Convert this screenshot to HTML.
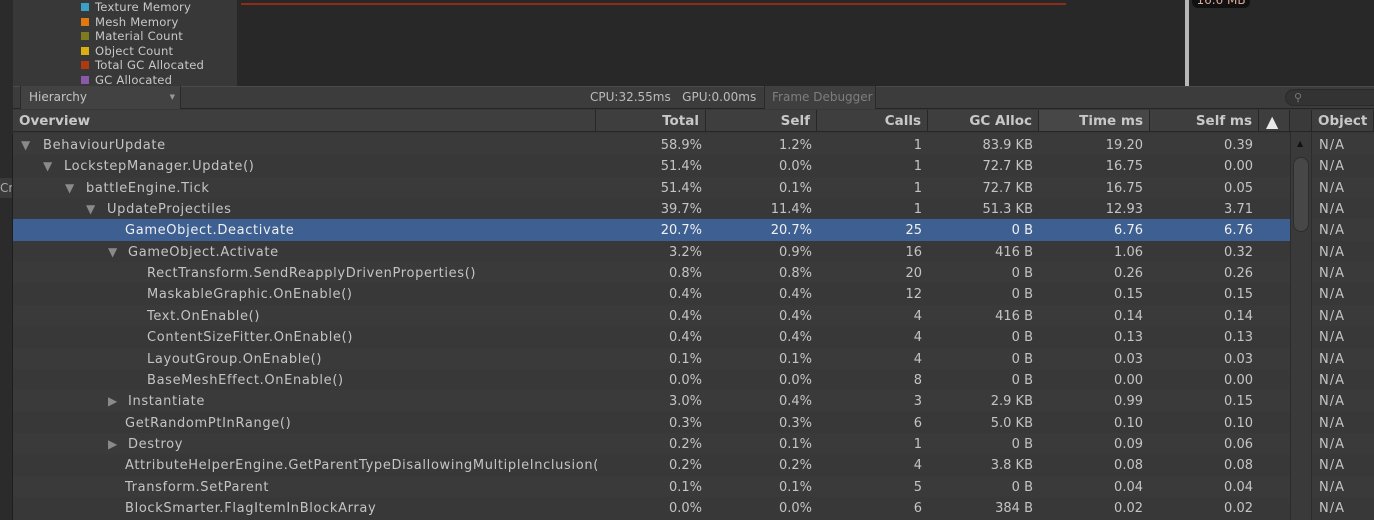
<!DOCTYPE html>
<html><head><meta charset="utf-8"><style>
*{margin:0;padding:0;box-sizing:border-box}
body{width:1374px;height:520px;overflow:hidden;background:#383838;font-family:"DejaVu Sans","Liberation Sans",sans-serif;color:#c4c4c4;font-size:13px;position:relative}
.a{position:absolute}
.leg{position:absolute;left:81px;font-size:11.6px;color:#c8c8c8;line-height:14.5px;letter-spacing:0.2px}
.leg i{display:inline-block;width:8px;height:8px;margin-right:6px;vertical-align:0px}
.row{position:absolute;left:13px;width:1277px;height:21.35px;line-height:23px}
.row span{position:absolute;top:0;white-space:nowrap}
.row span.n{letter-spacing:0.65px}
.r{text-align:right}
.tri{font-size:12px;color:#8a8a8a}
.hd{position:absolute;top:110px;height:22px;line-height:22px;font-weight:bold;color:#c8c8c8;background:#3e3e3e;border-right:1px solid #262626;border-bottom:1px solid #262626;font-size:13.5px;padding-right:6px;text-align:right}
.obj{position:absolute;left:1312px;width:62px;height:21.35px;line-height:23px;padding-left:7px;letter-spacing:1px}
</style></head><body>
<div class="a" style="left:0;top:0;width:13px;height:520px;background:#2b2b2b"></div>
<div class="a" style="left:0;top:178px;width:13px;height:20px;background:#3a3a3a;color:#aaa;font-size:12px;line-height:20px">Cr</div>
<div class="a" style="left:0;top:134px;width:13px;height:386px;border-right:1px solid #1e1e1e"></div>
<div class="a" style="left:13px;top:0;width:224px;height:86px;background:#383838"></div>
<div class="leg" style="top:0"><i style="background:#3aa0c8"></i>Texture Memory</div>
<div class="leg" style="top:14.5px"><i style="background:#e07a10"></i>Mesh Memory</div>
<div class="leg" style="top:29px"><i style="background:#7d7a20"></i>Material Count</div>
<div class="leg" style="top:43.5px"><i style="background:#d8b012"></i>Object Count</div>
<div class="leg" style="top:58px"><i style="background:#b03a10"></i>Total GC Allocated</div>
<div class="leg" style="top:72.5px"><i style="background:#8a5aa8"></i>GC Allocated</div>
<div class="a" style="left:237px;top:0;width:1137px;height:86px;background:#282828"></div>
<div class="a" style="left:241px;top:3px;width:825px;height:2px;background:#8e2c18"></div>
<div class="a" style="left:1185px;top:0;width:4px;height:86px;background:#b8b8b8"></div>
<div class="a" style="left:1192px;top:-6px;width:58px;height:14px;background:#111;border-radius:6px;color:#d8a898;font-size:12px;line-height:12px;text-align:center">16.6 MB</div>
<div class="a" style="left:13px;top:86px;width:1361px;height:23px;background:#3c3c3c;border-top:1px solid #4a4a4a;border-bottom:1px solid #252525"></div>
<div class="a" style="left:20px;top:86px;width:161px;height:23px;background:#424242;border-right:1px solid #2a2a2a;border-left:1px solid #2a2a2a;font-size:12px;line-height:23px;padding-left:8px">Hierarchy<span style="position:absolute;right:5px;font-size:7px;color:#999">▼</span></div>
<div class="a" style="left:590px;top:86px;font-size:12px;line-height:23px;color:#bbb">CPU:32.55ms&nbsp;&nbsp;&nbsp;GPU:0.00ms</div>
<div class="a" style="left:764px;top:86px;width:112px;height:23px;background:#3f3f3f;border-left:1px solid #2a2a2a;border-right:1px solid #2a2a2a;font-size:12px;line-height:23px;padding-left:7px;color:#7e7e7e">Frame Debugger</div>
<div class="a" style="left:1285px;top:89px;width:100px;height:17px;border-radius:9px;background:#333;border:1px solid #2a2a2a;color:#777;font-size:11px;line-height:15px;padding-left:8px">&#9906;</div>
<div class="hd" style="left:13px;width:583px;text-align:left;padding-left:6px">Overview</div>
<div class="hd" style="left:596px;width:110px">Total</div>
<div class="hd" style="left:706px;width:111px">Self</div>
<div class="hd" style="left:817px;width:111px">Calls</div>
<div class="hd" style="left:928px;width:111px">GC Alloc</div>
<div class="hd" style="left:1039px;width:111px;background:#474747">Time ms</div>
<div class="hd" style="left:1150px;width:109px">Self ms</div>
<div class="hd" style="left:1259px;width:31px"></div>
<div class="a" style="left:1266px;top:113px;color:#e8e8e8;font-size:16px;line-height:18px">&#9650;</div>
<div class="hd" style="left:1290px;width:22px;background:#3a3a3a"></div>
<div class="hd" style="left:1312px;width:62px;text-align:left;padding-left:6px">Object</div>
<div class="a" style="left:1290px;top:132px;width:22px;height:388px;background:#3a3a3a;border-left:1px solid #2c2c2c;border-right:1px solid #2c2c2c"></div>
<div class="a" style="left:1297px;top:139px;font-size:8px;color:#111">&#9650;</div>
<div class="a" style="left:1293px;top:157px;width:16px;height:75px;border-radius:8px;background:#474747;border:1px solid #2c2c2c"></div>

<div class="row" style="top:134px;background:#3a3a3a"><span class="tri" style="left:8px">▼</span><span class="n" style="left:30px">BehaviourUpdate</span><span class="r" style="right:588px">58.9%</span><span class="r" style="right:478px">1.2%</span><span class="r" style="right:368px">1</span><span class="r" style="right:257px">83.9 KB</span><span class="r" style="right:147px">19.20</span><span class="r" style="right:37px">0.39</span></div>
<div class="row" style="top:155.35px;background:#383838"><span class="tri" style="left:30px">▼</span><span class="n" style="left:51px">LockstepManager.Update()</span><span class="r" style="right:588px">51.4%</span><span class="r" style="right:478px">0.0%</span><span class="r" style="right:368px">1</span><span class="r" style="right:257px">72.7 KB</span><span class="r" style="right:147px">16.75</span><span class="r" style="right:37px">0.00</span></div>
<div class="row" style="top:176.7px;background:#3a3a3a"><span class="tri" style="left:52px">▼</span><span class="n" style="left:73px">battleEngine.Tick</span><span class="r" style="right:588px">51.4%</span><span class="r" style="right:478px">0.1%</span><span class="r" style="right:368px">1</span><span class="r" style="right:257px">72.7 KB</span><span class="r" style="right:147px">16.75</span><span class="r" style="right:37px">0.05</span></div>
<div class="row" style="top:198.05px;background:#383838"><span class="tri" style="left:73px">▼</span><span class="n" style="left:94px">UpdateProjectiles</span><span class="r" style="right:588px">39.7%</span><span class="r" style="right:478px">11.4%</span><span class="r" style="right:368px">1</span><span class="r" style="right:257px">51.3 KB</span><span class="r" style="right:147px">12.93</span><span class="r" style="right:37px">3.71</span></div>
<div class="row" style="top:219.4px;background:#3d5f92;color:#f0f0f0"><span class="n" style="left:112px">GameObject.Deactivate</span><span class="r" style="right:588px">20.7%</span><span class="r" style="right:478px">20.7%</span><span class="r" style="right:368px">25</span><span class="r" style="right:257px">0 B</span><span class="r" style="right:147px">6.76</span><span class="r" style="right:37px">6.76</span></div>
<div class="row" style="top:240.75px;background:#383838"><span class="tri" style="left:95px">▼</span><span class="n" style="left:115px">GameObject.Activate</span><span class="r" style="right:588px">3.2%</span><span class="r" style="right:478px">0.9%</span><span class="r" style="right:368px">16</span><span class="r" style="right:257px">416 B</span><span class="r" style="right:147px">1.06</span><span class="r" style="right:37px">0.32</span></div>
<div class="row" style="top:262.1px;background:#3a3a3a"><span class="n" style="left:134px">RectTransform.SendReapplyDrivenProperties()</span><span class="r" style="right:588px">0.8%</span><span class="r" style="right:478px">0.8%</span><span class="r" style="right:368px">20</span><span class="r" style="right:257px">0 B</span><span class="r" style="right:147px">0.26</span><span class="r" style="right:37px">0.26</span></div>
<div class="row" style="top:283.45px;background:#383838"><span class="n" style="left:134px">MaskableGraphic.OnEnable()</span><span class="r" style="right:588px">0.4%</span><span class="r" style="right:478px">0.4%</span><span class="r" style="right:368px">12</span><span class="r" style="right:257px">0 B</span><span class="r" style="right:147px">0.15</span><span class="r" style="right:37px">0.15</span></div>
<div class="row" style="top:304.8px;background:#3a3a3a"><span class="n" style="left:134px">Text.OnEnable()</span><span class="r" style="right:588px">0.4%</span><span class="r" style="right:478px">0.4%</span><span class="r" style="right:368px">4</span><span class="r" style="right:257px">416 B</span><span class="r" style="right:147px">0.14</span><span class="r" style="right:37px">0.14</span></div>
<div class="row" style="top:326.15px;background:#383838"><span class="n" style="left:134px">ContentSizeFitter.OnEnable()</span><span class="r" style="right:588px">0.4%</span><span class="r" style="right:478px">0.4%</span><span class="r" style="right:368px">4</span><span class="r" style="right:257px">0 B</span><span class="r" style="right:147px">0.13</span><span class="r" style="right:37px">0.13</span></div>
<div class="row" style="top:347.5px;background:#3a3a3a"><span class="n" style="left:134px">LayoutGroup.OnEnable()</span><span class="r" style="right:588px">0.1%</span><span class="r" style="right:478px">0.1%</span><span class="r" style="right:368px">4</span><span class="r" style="right:257px">0 B</span><span class="r" style="right:147px">0.03</span><span class="r" style="right:37px">0.03</span></div>
<div class="row" style="top:368.85px;background:#383838"><span class="n" style="left:134px">BaseMeshEffect.OnEnable()</span><span class="r" style="right:588px">0.0%</span><span class="r" style="right:478px">0.0%</span><span class="r" style="right:368px">8</span><span class="r" style="right:257px">0 B</span><span class="r" style="right:147px">0.00</span><span class="r" style="right:37px">0.00</span></div>
<div class="row" style="top:390.2px;background:#3a3a3a"><span class="tri" style="left:95px">▶</span><span class="n" style="left:115px">Instantiate</span><span class="r" style="right:588px">3.0%</span><span class="r" style="right:478px">0.4%</span><span class="r" style="right:368px">3</span><span class="r" style="right:257px">2.9 KB</span><span class="r" style="right:147px">0.99</span><span class="r" style="right:37px">0.15</span></div>
<div class="row" style="top:411.55px;background:#383838"><span class="n" style="left:112px">GetRandomPtInRange()</span><span class="r" style="right:588px">0.3%</span><span class="r" style="right:478px">0.3%</span><span class="r" style="right:368px">6</span><span class="r" style="right:257px">5.0 KB</span><span class="r" style="right:147px">0.10</span><span class="r" style="right:37px">0.10</span></div>
<div class="row" style="top:432.9px;background:#3a3a3a"><span class="tri" style="left:95px">▶</span><span class="n" style="left:115px">Destroy</span><span class="r" style="right:588px">0.2%</span><span class="r" style="right:478px">0.1%</span><span class="r" style="right:368px">1</span><span class="r" style="right:257px">0 B</span><span class="r" style="right:147px">0.09</span><span class="r" style="right:37px">0.06</span></div>
<div class="row" style="top:454.25px;background:#383838"><span class="n" style="left:112px;width:472px;overflow:hidden">AttributeHelperEngine.GetParentTypeDisallowingMultipleInclusion(</span><span class="r" style="right:588px">0.2%</span><span class="r" style="right:478px">0.2%</span><span class="r" style="right:368px">4</span><span class="r" style="right:257px">3.8 KB</span><span class="r" style="right:147px">0.08</span><span class="r" style="right:37px">0.08</span></div>
<div class="row" style="top:475.6px;background:#3a3a3a"><span class="n" style="left:112px">Transform.SetParent</span><span class="r" style="right:588px">0.1%</span><span class="r" style="right:478px">0.1%</span><span class="r" style="right:368px">5</span><span class="r" style="right:257px">0 B</span><span class="r" style="right:147px">0.04</span><span class="r" style="right:37px">0.04</span></div>
<div class="row" style="top:496.95px;background:#383838"><span class="n" style="left:112px">BlockSmarter.FlagItemInBlockArray</span><span class="r" style="right:588px">0.0%</span><span class="r" style="right:478px">0.0%</span><span class="r" style="right:368px">6</span><span class="r" style="right:257px">384 B</span><span class="r" style="right:147px">0.02</span><span class="r" style="right:37px">0.02</span></div>
<div class="obj" style="top:134px;background:#3a3a3a">N/A</div>
<div class="obj" style="top:155.35px">N/A</div>
<div class="obj" style="top:176.7px;background:#3a3a3a">N/A</div>
<div class="obj" style="top:198.05px">N/A</div>
<div class="obj" style="top:219.4px;background:#3a3a3a">N/A</div>
<div class="obj" style="top:240.75px">N/A</div>
<div class="obj" style="top:262.1px;background:#3a3a3a">N/A</div>
<div class="obj" style="top:283.45px">N/A</div>
<div class="obj" style="top:304.8px;background:#3a3a3a">N/A</div>
<div class="obj" style="top:326.15px">N/A</div>
<div class="obj" style="top:347.5px;background:#3a3a3a">N/A</div>
<div class="obj" style="top:368.85px">N/A</div>
<div class="obj" style="top:390.2px;background:#3a3a3a">N/A</div>
<div class="obj" style="top:411.55px">N/A</div>
<div class="obj" style="top:432.9px;background:#3a3a3a">N/A</div>
<div class="obj" style="top:454.25px">N/A</div>
<div class="obj" style="top:475.6px;background:#3a3a3a">N/A</div>
<div class="obj" style="top:496.95px">N/A</div>
</body></html>
